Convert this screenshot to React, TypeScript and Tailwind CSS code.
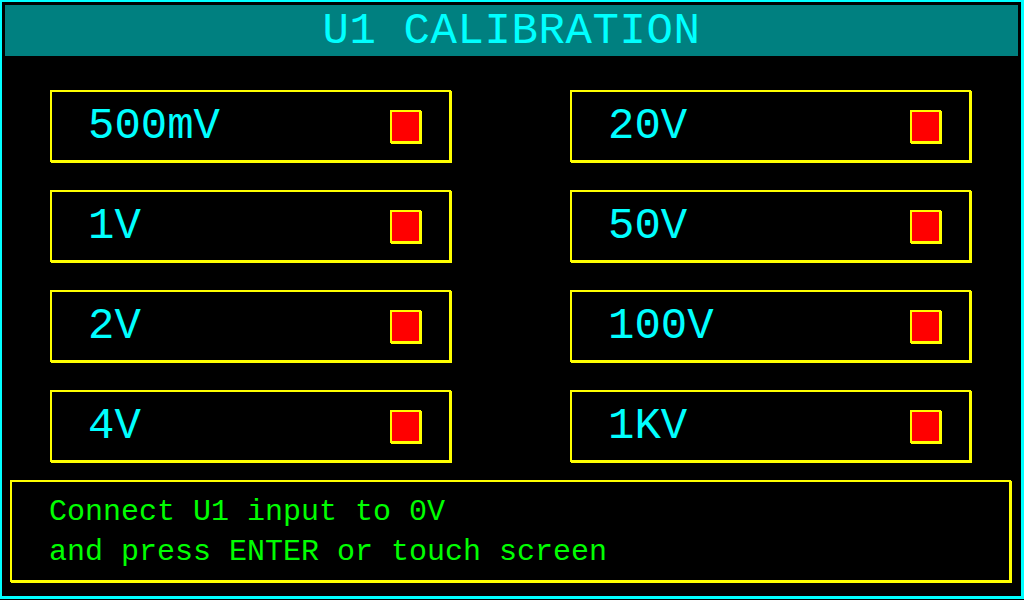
import React from "react";

const left = ["500mV", "1V", "2V", "4V"];
const right = ["20V", "50V", "100V", "1KV"];

function RangeBox({ label }: { label: string }) {
  return (
    <div className="w-[401px] h-[72px] border-2 border-[#ffff00] shadow-[1px_1px_0_#ffff00] flex items-center pl-[36px] pr-[28px]">
      <span className="text-[44px] leading-none text-[#00ffff]">{label}</span>
      <div className="ml-auto w-[31px] h-[33px] border-2 border-[#ffff00] bg-[#ff0000] shadow-[1px_1px_0_#ffff00]" />
    </div>
  );
}

export default function App() {
  return (
    <div
      className="w-[1024px] h-[600px] bg-black"
      style={{ fontFamily: '"Liberation Mono", "DejaVu Sans Mono", monospace' }}
    >
      <div className="h-[599px] border-t-2 border-l-2 border-r-[3px] border-b-[3px] border-[#00ffff] p-[3px] flex flex-col">
        <div className="h-[51px] bg-[#008080] flex items-center justify-center">
          <span className="text-[44px] leading-none text-[#00ffff] tracking-[0.6px]">U1 CALIBRATION</span>
        </div>
        <div className="mt-[34px] ml-[45px] grid grid-cols-[401px_401px] gap-x-[119px] gap-y-[28px]">
          {left.map((l, i) => (
            <React.Fragment key={l}>
              <RangeBox label={l} />
              <RangeBox label={right[i]} />
            </React.Fragment>
          ))}
        </div>
        <div className="mt-[18px] ml-[5px] w-[1001px] h-[102px] border-2 border-[#ffff00] shadow-[1px_1px_0_#ffff00] pl-[37px] pt-[10px] text-[30px] leading-[40px] text-[#00ff00]">
          <div>Connect U1 input to 0V</div>
          <div>and press ENTER or touch screen</div>
        </div>
      </div>
    </div>
  );
}
